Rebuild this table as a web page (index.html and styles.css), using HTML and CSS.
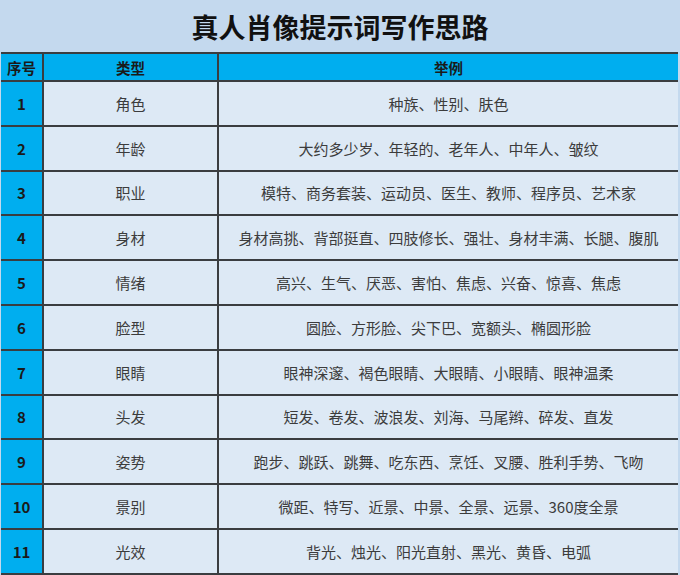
FILE: index.html
```html
<!DOCTYPE html>
<html lang="zh-CN">
<head>
<meta charset="utf-8">
<link rel="stylesheet" href="styles.css">
</head>
<body>
<div class="page">
  <div class="title">真人肖像提示词写作思路</div>
  <table class="grid">
    <colgroup>
      <col class="c-num">
      <col class="c-type">
      <col class="c-ex">
    </colgroup>
    <thead>
      <tr><th>序号</th><th>类型</th><th>举例</th></tr>
    </thead>
    <tbody>
      <tr><td class="num">1</td><td>角色</td><td>种族、性别、肤色</td></tr>
      <tr><td class="num">2</td><td>年龄</td><td>大约多少岁、年轻的、老年人、中年人、皱纹</td></tr>
      <tr><td class="num">3</td><td>职业</td><td>模特、商务套装、运动员、医生、教师、程序员、艺术家</td></tr>
      <tr><td class="num">4</td><td>身材</td><td>身材高挑、背部挺直、四肢修长、强壮、身材丰满、长腿、腹肌</td></tr>
      <tr><td class="num">5</td><td>情绪</td><td>高兴、生气、厌恶、害怕、焦虑、兴奋、惊喜、焦虑</td></tr>
      <tr><td class="num">6</td><td>脸型</td><td>圆脸、方形脸、尖下巴、宽额头、椭圆形脸</td></tr>
      <tr><td class="num">7</td><td>眼睛</td><td>眼神深邃、褐色眼睛、大眼睛、小眼睛、眼神温柔</td></tr>
      <tr><td class="num">8</td><td>头发</td><td>短发、卷发、波浪发、刘海、马尾辫、碎发、直发</td></tr>
      <tr><td class="num">9</td><td>姿势</td><td>跑步、跳跃、跳舞、吃东西、烹饪、叉腰、胜利手势、飞吻</td></tr>
      <tr><td class="num">10</td><td>景别</td><td>微距、特写、近景、中景、全景、远景、360度全景</td></tr>
      <tr><td class="num">11</td><td>光效</td><td>背光、烛光、阳光直射、黑光、黄昏、电弧</td></tr>
    </tbody>
  </table>
</div>
</body>
</html>
```
FILE: styles.css
```css
html, body {
  margin: 0;
  padding: 0;
  background: #c4d9ee;
}
.page {
  width: 680px;
  height: 575px;
  overflow: hidden;
  background: #c4d9ee;
  font-family: "Noto Sans CJK SC", "Noto Sans", sans-serif;
}
.title {
  height: 52px;
  line-height: 54px;
  text-align: center;
  font-size: 27px;
  font-weight: bold;
  color: #111;
}
.grid {
  margin-left: 1px;
  width: 677px;
  border-collapse: collapse;
  table-layout: fixed;
}
.c-num { width: 42px; }
.c-type { width: 175px; }
.grid th, .grid td {
  border: 2px solid #3a3d40;
  padding: 0;
  text-align: center;
  vertical-align: middle;
}
.grid th:first-child, .grid td:first-child {
  border-left: none;
}
.grid th:last-child, .grid td:last-child {
  border-right: none;
}
.grid th {
  height: 26px;
  background: #00aeef;
  font-size: 14.5px;
  font-weight: bold;
  color: #1a1a1a;
}
.grid td {
  height: 42.8px;
  background: #dde9f5;
  font-size: 15px;
  color: #3c3c3c;
}
.grid td.num {
  background: #00aeef;
  font-weight: bold;
  color: #1a1a1a;
  font-size: 15px;
}
```
